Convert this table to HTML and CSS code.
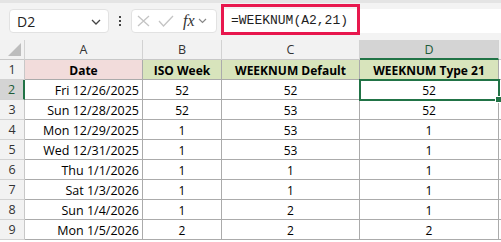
FILE: index.html
```html
<!DOCTYPE html>
<html>
<head>
<meta charset="utf-8">
<link rel="stylesheet" href="styles.css">
</head>
<body>
<div class="toolbar">
  <div class="namebox">
    <span class="name">D2</span>
    <svg class="chev" width="10" height="6" viewBox="0 0 10 6"><path d="M1 1l4 4 4-4" fill="none" stroke="#444" stroke-width="1.3"/></svg>
  </div>
  <div class="dots"><i></i><i></i><i></i></div>
  <div class="fxbox">
    <svg width="13" height="12" viewBox="0 0 13 12"><path d="M1 1l11 10M12 1L1 11" stroke="#c4c4c4" stroke-width="1.3" fill="none"/></svg>
    <svg width="16" height="12" viewBox="0 0 16 12"><path d="M1 6l4.5 5L15 1" stroke="#c4c4c4" stroke-width="1.3" fill="none"/></svg>
    <span class="fx">fx</span>
    <svg class="chev2" width="9" height="6" viewBox="0 0 9 6"><path d="M1 1l3.5 3.5L8 1" fill="none" stroke="#888" stroke-width="1.2"/></svg>
  </div>
  <div class="formula">
    <span class="highlight">=WEEKNUM(A2,21)</span>
  </div>
</div>
<div class="sheet">
  <div class="hdr corner"><svg width="13" height="13" viewBox="0 0 13 13"><path d="M13 0V13H0z" fill="#bdbdbd"/></svg></div>
  <div class="hdr">A</div>
  <div class="hdr">B</div>
  <div class="hdr">C</div>
  <div class="hdr sel-col">D</div>
  <div class="hdr edge"></div>

  <div class="rh">1</div>
  <div class="c title pink">Date</div>
  <div class="c title green">ISO Week</div>
  <div class="c title green">WEEKNUM Default</div>
  <div class="c title green">WEEKNUM Type 21</div>
  <div class="c edge"></div>

  <div class="rh sel-row">2</div>
  <div class="c r">Fri 12/26/2025</div>
  <div class="c">52</div>
  <div class="c">52</div>
  <div class="c active">52</div>
  <div class="c edge"></div>

  <div class="rh">3</div>
  <div class="c r">Sun 12/28/2025</div>
  <div class="c">52</div>
  <div class="c">53</div>
  <div class="c">52</div>
  <div class="c edge"></div>

  <div class="rh">4</div>
  <div class="c r">Mon 12/29/2025</div>
  <div class="c">1</div>
  <div class="c">53</div>
  <div class="c">1</div>
  <div class="c edge"></div>

  <div class="rh">5</div>
  <div class="c r">Wed 12/31/2025</div>
  <div class="c">1</div>
  <div class="c">53</div>
  <div class="c">1</div>
  <div class="c edge"></div>

  <div class="rh">6</div>
  <div class="c r">Thu 1/1/2026</div>
  <div class="c">1</div>
  <div class="c">1</div>
  <div class="c">1</div>
  <div class="c edge"></div>

  <div class="rh">7</div>
  <div class="c r">Sat 1/3/2026</div>
  <div class="c">1</div>
  <div class="c">1</div>
  <div class="c">1</div>
  <div class="c edge"></div>

  <div class="rh">8</div>
  <div class="c r">Sun 1/4/2026</div>
  <div class="c">1</div>
  <div class="c">2</div>
  <div class="c">1</div>
  <div class="c edge"></div>

  <div class="rh">9</div>
  <div class="c r">Mon 1/5/2026</div>
  <div class="c">2</div>
  <div class="c">2</div>
  <div class="c">2</div>
  <div class="c edge"></div>
</div>
</body>
</html>
```
FILE: styles.css
```css
html, body {
  margin: 0;
  padding: 0;
  background: #ffffff;
  overflow: hidden;
}
body {
  width: 501px;
  height: 242px;
  font-family: "Open Sans", "Liberation Sans", sans-serif;
}
.toolbar {
  box-sizing: border-box;
  height: 40px;
  background: #f3f3f3;
  border-top: 3px solid #e4e4e4;
  padding: 6px 0 0 9px;
  display: flex;
  align-items: flex-start;
}
.namebox {
  box-sizing: border-box;
  width: 100px;
  height: 24px;
  background: #fff;
  border: 1px solid #e2e2e2;
  border-radius: 4px;
  display: flex;
  align-items: center;
  justify-content: space-between;
  padding: 0 7px 0 7px;
}
.name {
  font-size: 14px;
  color: #222;
}
.chev { margin-top: 1px; }
.dots {
  width: 22px;
  height: 24px;
  display: flex;
  flex-direction: column;
  align-items: center;
  justify-content: center;
  gap: 2px;
}
.dots i {
  display: block;
  width: 2px;
  height: 2px;
  background: #444;
}
.fxbox {
  box-sizing: border-box;
  width: 86px;
  height: 24px;
  background: #fff;
  border: 1px solid #e2e2e2;
  border-radius: 4px;
  display: flex;
  align-items: center;
  padding: 0 4px 0 5px;
  gap: 8px;
}
.fx {
  font-family: "Liberation Serif", serif;
  font-style: italic;
  font-size: 16px;
  color: #333;
  margin-left: 1px;
  margin-right: -5px;
  line-height: 1;
}
.formula {
  flex: 1;
  height: 24px;
  margin-left: 5px;
  background: #fff;
  display: flex;
  align-items: flex-start;
}
.highlight {
  box-sizing: border-box;
  width: 139px;
  height: 31px;
  margin-top: -5px;
  margin-left: -1px;
  border: 3px solid #e8184e;
  font-family: "Liberation Mono", monospace;
  font-size: 13px;
  color: #1e1e1e;
  display: flex;
  align-items: center;
  padding: 1px 0 0 7px;
}
.sheet {
  display: grid;
  grid-template-columns: 25px 118px 79px 138px 139px 1fr;
  grid-auto-rows: 20px;
  font-size: 12px;
  color: #000;
}
.hdr {
  box-sizing: border-box;
  background: #f2f2f2;
  border-right: 1px solid #d2d2d2;
  border-bottom: 1px solid #c8c8c8;
  display: flex;
  align-items: center;
  justify-content: center;
  font-size: 12.5px;
  color: #333;
}
.corner {
  justify-content: flex-end;
  align-items: flex-end;
  padding: 0 3px 3px 0;
}
.hdr.sel-col {
  background: #d4d4d4;
  border-bottom: 2px solid #217346;
  color: #1d5c38;
}
.rh {
  box-sizing: border-box;
  background: #f2f2f2;
  border-right: 1px solid #c8c8c8;
  border-bottom: 1px solid #d2d2d2;
  display: flex;
  align-items: center;
  justify-content: center;
  font-size: 12.5px;
  color: #333;
}
.rh.sel-row {
  background: #d4d4d4;
  border-right: 2px solid #217346;
  color: #1d5c38;
}
.c {
  box-sizing: border-box;
  border-right: 1px solid #ababab;
  border-bottom: 1px solid #ababab;
  display: flex;
  align-items: center;
  justify-content: center;
  padding-top: 1px;
}
.c.r {
  justify-content: flex-end;
  padding-right: 3px;
  font-size: 12.5px;
}
.title {
  font-weight: bold;
}
.pink { background: #f2dcdb; }
.green { background: #d8e4bc; }
.edge {
  border-right: none;
}
.hdr.edge { background: #f2f2f2; }
.active {
  position: relative;
  outline: 2px solid #217346;
  outline-offset: -1px;
}
.active::after {
  content: "";
  position: absolute;
  right: -4px;
  bottom: -4px;
  width: 5px;
  height: 5px;
  background: #217346;
  border: 1px solid #fff;
}
```
